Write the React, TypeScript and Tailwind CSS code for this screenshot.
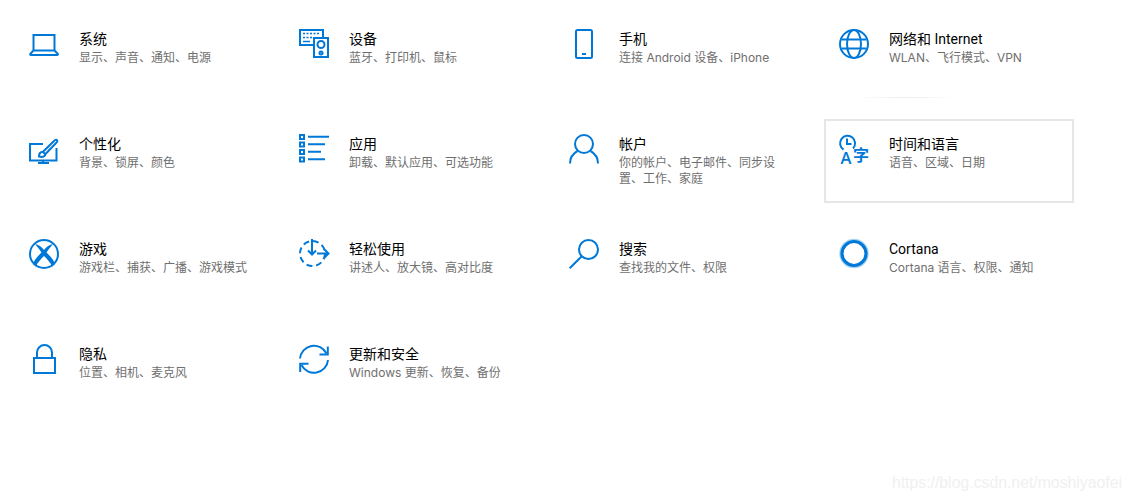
import type { ReactNode } from "react";

function Icon({ children }: { children: ReactNode }) {
  return (
    <svg
      width="30"
      height="30"
      viewBox="0 0 30 30"
      fill="none"
      stroke="#0078d7"
      strokeWidth="2"
      className="shrink-0 overflow-visible"
    >
      {children}
    </svg>
  );
}

const icons: Record<string, ReactNode> = {
  laptop: (
    <>
      <path d="M4.500 21.500V6h21v15.500" />
      <path d="M4.500 21.500h21l3.200 3.200c.5.600.2 1.300-.6 1.300H2c-.8 0-1.100-.7-.6-1.300z" />
    </>
  ),
  devices: (
    <>
      <path d="M24 8V1H1v15h13" />
      <rect x="15" y="9" width="14" height="19" />
      <circle cx="22" cy="15.500" r="3.500" />
      <circle cx="22" cy="24" r="1.500" />
      <path
        d="M4 4.500h2M7.500 4.500h2M11 4.500h2M14.500 4.500h2M18 4.500h2M4 8.500h2M7.500 8.500h2M11 8.500h2M4 12.500h7"
        strokeWidth="1.600"
      />
    </>
  ),
  phone: (
    <>
      <rect x="7" y="1" width="16" height="28" rx="1.500" />
      <path d="M13 25h4" />
    </>
  ),
  globe: (
    <>
      <circle cx="15" cy="15" r="14" />
      <ellipse cx="15" cy="15" rx="7" ry="14" />
      <path d="M2.500 10.500h25M2.500 19.500h25" />
    </>
  ),
  brush: (
    <>
      <path d="M14 10H1v16.500h26.500V14" />
      <path d="M14 26.500V30M9 29h11" />
      <path
        d="M10 22.500c0-3 1.500-4.500 4-4.700L25 7c1-1.200 2.200-1.600 3-.9.700.7.300 2-.9 3L16.500 20c0 2.500-3 3.500-6.500 2.500z"
        fill="#fff"
      />
      <path d="M14 18l2.500 2.500" />
    </>
  ),
  apps: (
    <>
      <path d="M1 1h4v4H1zM1 8.500h4v4H1zM1 16h4v4H1zM1 23.500h4v4H1z" />
      <path d="M9 2.800h21M9 10.300h17M9 17.800h13M9 25.300h17" />
    </>
  ),
  account: (
    <>
      <circle cx="15" cy="10" r="9" />
      <path d="M1 29.500A14.500 14.500 0 0 1 8.500 17M21.500 17A14.500 14.500 0 0 1 29 29.500" />
    </>
  ),
  time: (
    <>
      <path d="M14 14.500A7.500 7.500 0 1 0 4.500 15.600" />
      <path d="M8 4.500V10h4.500" />
      <text
        x="1.500"
        y="30"
        fontSize="16.500"
        fontWeight="600"
        fill="#0078d7"
        stroke="none"
        fontFamily="'Open Sans', sans-serif"
      >
        A
      </text>
      <text
        x="14"
        y="27"
        fontSize="16"
        fontWeight="700"
        fill="#0078d7"
        stroke="none"
        fontFamily="'Noto Sans CJK SC', sans-serif"
      >
        字
      </text>
    </>
  ),
  xbox: (
    <>
      <circle cx="15" cy="15" r="14" />
      <path
        d="M6 5C9.500 5.500 12.500 8 15 11 17.500 8 20.500 5.500 24 5 21.500 8 19.500 10.500 17.500 13.500 21.500 17.500 25 21 26 25L23 27.500C21.500 23.500 18 20 15 17 12 20 8.500 23.500 7 27.500L4 25C5 21 8.500 17.500 12.500 13.500 10.500 10.500 8.500 8 6 5z"
        fill="#0078d7"
        stroke="none"
      />
    </>
  ),
  ease: (
    <>
      <circle cx="13.500" cy="14.500" r="12.500" strokeDasharray="6 3.800" />
      <path d="M13 0v15M9 11.500l4 4 4-4" />
      <path d="M18 14.500h11M25.500 10.500l4 4-4 4" />
    </>
  ),
  search: (
    <>
      <circle cx="19.500" cy="10.500" r="9.500" />
      <path d="M12.500 17.500L.7 29.300" />
    </>
  ),
  cortana: (
    <>
      <circle cx="15" cy="14.500" r="14" stroke="#a8d5f2" strokeWidth="1.500" />
      <circle cx="15" cy="14.500" r="12" strokeWidth="3.200" />
    </>
  ),
  lock: (
    <>
      <rect x="5" y="14" width="21" height="15" />
      <path d="M8 14V8.500a7.500 7.500 0 0 1 15 0V14" />
    </>
  ),
  update: (
    <>
      <path d="M1 14.500A14 14 0 0 1 27.500 9.500" />
      <path d="M28.800 2.500V10.500H20.500" />
      <path d="M29 16A14 14 0 0 1 2.500 21" />
      <path d="M1.200 28V19.800H9.500" />
    </>
  ),
};

const items = [
  { icon: "laptop", title: "系统", sub: "显示、声音、通知、电源" },
  { icon: "devices", title: "设备", sub: "蓝牙、打印机、鼠标" },
  { icon: "phone", title: "手机", sub: "连接 Android 设备、iPhone" },
  { icon: "globe", title: "网络和 Internet", sub: "WLAN、飞行模式、VPN", reveal: true },
  { icon: "brush", title: "个性化", sub: "背景、锁屏、颜色" },
  { icon: "apps", title: "应用", sub: "卸载、默认应用、可选功能" },
  { icon: "account", title: "帐户", sub: "你的帐户、电子邮件、同步设置、工作、家庭" },
  { icon: "time", title: "时间和语言", sub: "语音、区域、日期", active: true },
  { icon: "xbox", title: "游戏", sub: "游戏栏、捕获、广播、游戏模式" },
  { icon: "ease", title: "轻松使用", sub: "讲述人、放大镜、高对比度" },
  { icon: "search", title: "搜索", sub: "查找我的文件、权限" },
  { icon: "cortana", title: "Cortana", sub: "Cortana 语言、权限、通知" },
  { icon: "lock", title: "隐私", sub: "位置、相机、麦克风" },
  { icon: "update", title: "更新和安全", sub: "Windows 更新、恢复、备份" },
];

export default function App() {
  return (
    <div className="relative h-[500px] w-[1132px] overflow-hidden bg-white pl-[14px] pt-[14px]">
      <div className="grid grid-cols-[repeat(4,250px)] auto-rows-[84px] gap-x-5 gap-y-[21px]">
        {items.map((item) => (
          <div
            key={item.title}
            className={`relative flex gap-5 border-2 pl-[13px] pt-[13px] ${
              item.active ? "border-[#e6e6e6]" : "border-transparent"
            }`}
          >
            <Icon>{icons[item.icon]}</Icon>
            <div className="w-[172px] min-w-0">
              <div className="font-['Roboto','Noto_Sans_CJK_SC',sans-serif] text-[14px] leading-5 text-black">
                {item.title}
              </div>
              <div className="mt-px font-['Inter','Noto_Sans_CJK_SC',sans-serif] text-[12px] leading-4 text-[#6f6f6f]">
                {item.sub}
              </div>
            </div>
            {item.reveal && (
              <div className="absolute -bottom-0.5 left-[30px] h-px w-[100px] bg-gradient-to-r from-transparent via-[#ececec] to-transparent" />
            )}
          </div>
        ))}
      </div>
      <div className="absolute right-[10px] top-[474px] font-['Liberation_Sans',sans-serif] text-[15.8px] leading-[18px] text-[#f0f0f0]">
        https://blog.csdn.net/moshiyaofei
      </div>
    </div>
  );
}
